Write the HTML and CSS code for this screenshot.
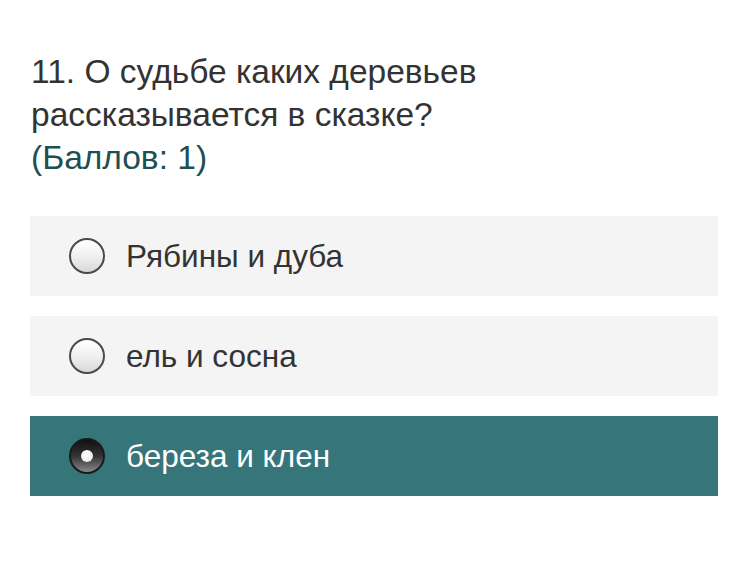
FILE: index.html
```html
<!DOCTYPE html>
<html lang="ru">
<head>
<meta charset="utf-8">
<link rel="stylesheet" href="styles.css">
</head>
<body>
<div class="quiz">
  <div class="question">
    <div class="title">11. О судьбе каких деревьев рассказывается в сказке?</div>
    <div class="points">(Баллов: 1)</div>
  </div>
  <div class="options">
    <label class="option"><span class="radio"></span><span class="text">Рябины и дуба</span></label>
    <label class="option"><span class="radio"></span><span class="text">ель и сосна</span></label>
    <label class="option selected"><span class="radio"></span><span class="text">береза и клен</span></label>
  </div>
</div>
</body>
</html>
```
FILE: styles.css
```css
html, body {
  margin: 0;
  padding: 0;
  background: #ffffff;
}
.quiz {
  padding: 50px 30px 0 30px;
  font-family: "Liberation Sans", Arial, sans-serif;
}
.question {
  width: 490px;
  padding-left: 1px;
  font-size: 33.5px;
  line-height: 43px;
  color: #333333;
}
.points {
  color: #1e4f52;
}
.options {
  margin-top: 37px;
  display: flex;
  flex-direction: column;
  gap: 20px;
}
.option {
  display: flex;
  align-items: center;
  height: 80px;
  background: #f4f4f4;
  padding-left: 39px;
}
.radio {
  box-sizing: border-box;
  width: 36px;
  height: 36px;
  border-radius: 50%;
  border: 2px solid #4a4a4a;
  background: linear-gradient(180deg, #ffffff 0%, #f0f0f0 50%, #d8d8d8 100%);
  flex: none;
  position: relative;
}
.text {
  margin-left: 21px;
  font-size: 31.5px;
  color: #333333;
}
.option.selected {
  background: #36757a;
}
.option.selected .text {
  color: #ffffff;
}
.option.selected .radio {
  border-color: #1a1a1a;
  background: linear-gradient(180deg, #111 0%, #333 50%, #888 100%);
}
.option.selected .radio::after {
  content: "";
  position: absolute;
  left: 50%;
  top: 50%;
  width: 12px;
  height: 12px;
  margin: -6px 0 0 -6px;
  border-radius: 50%;
  background: radial-gradient(circle at 45% 40%, #ffffff 0%, #eeeeee 60%, #cccccc 100%);
}
```
